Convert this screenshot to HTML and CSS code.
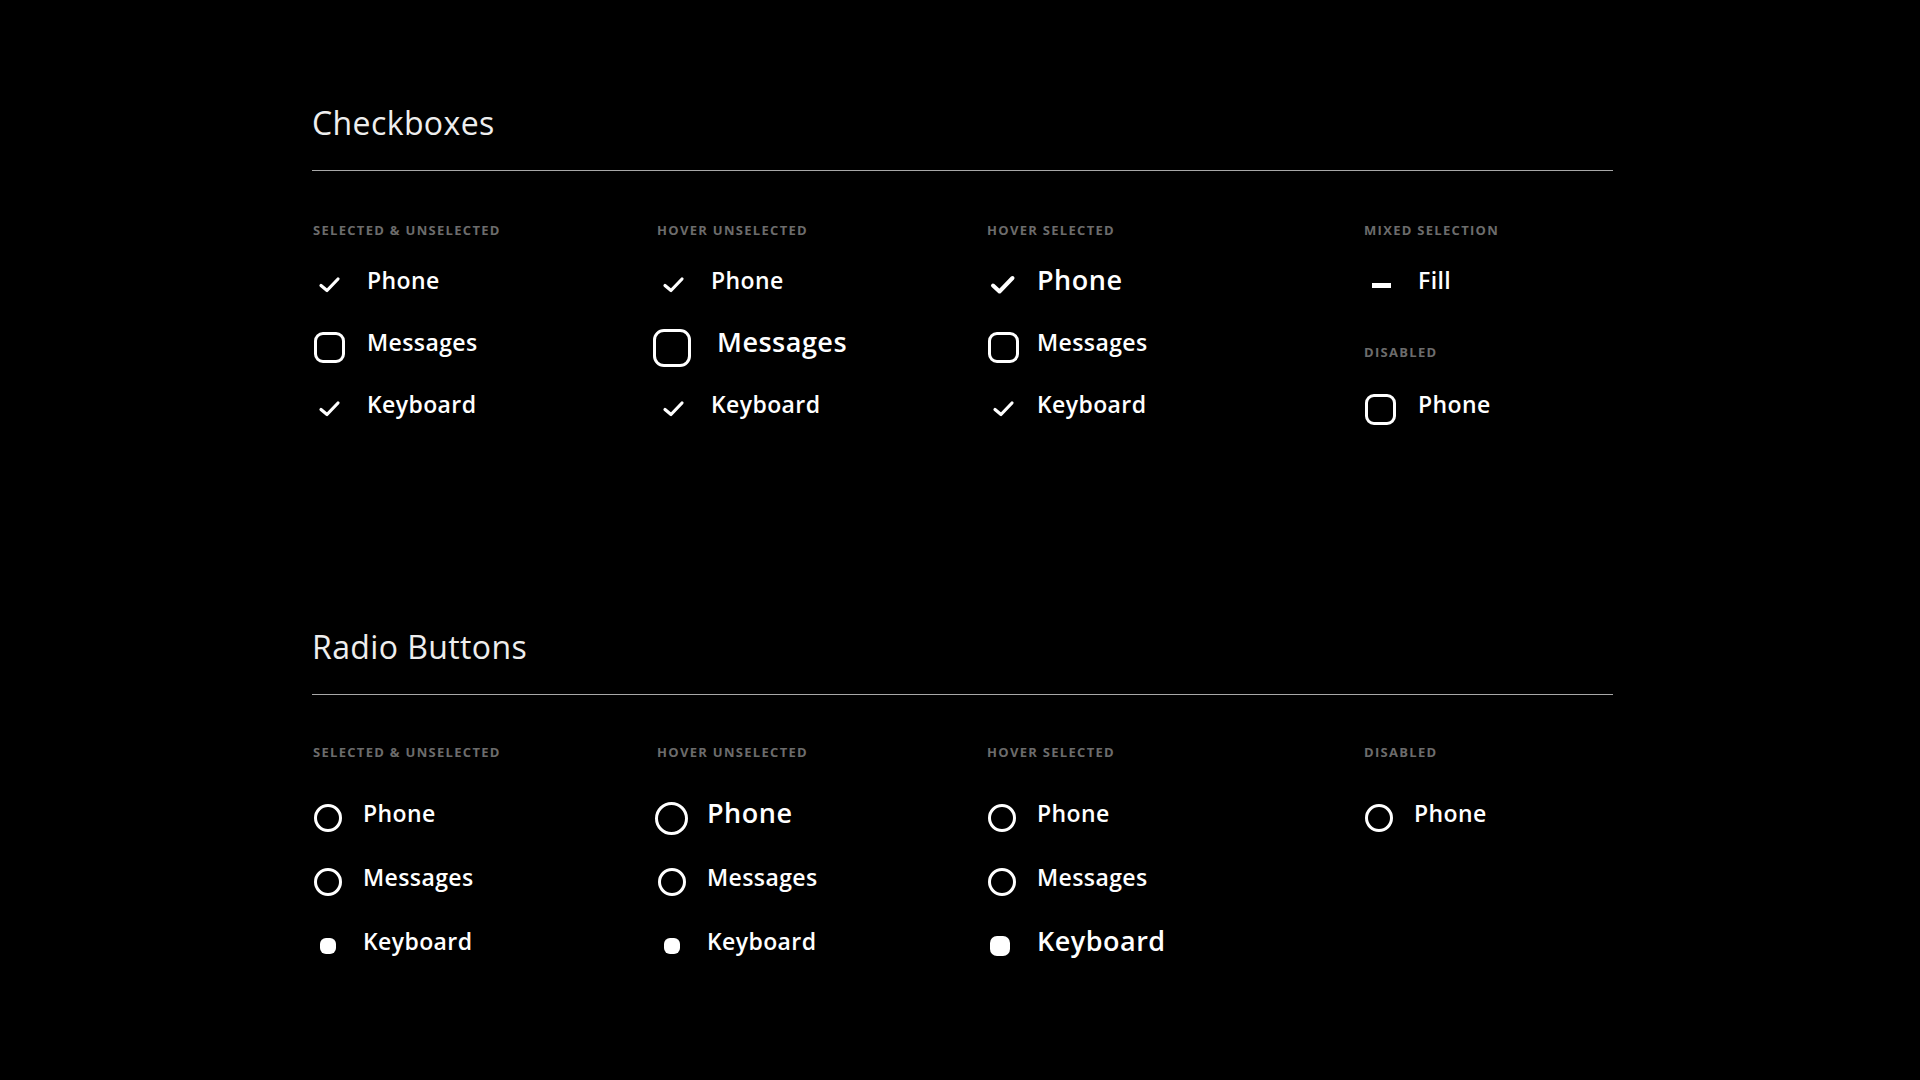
FILE: index.html
```html
<!DOCTYPE html>
<html lang="en">
<head>
  <meta charset="UTF-8" />
  <meta name="viewport" content="width=device-width, initial-scale=1.0" />
  <title>Checkboxes &amp; Radio Buttons</title>
  <link rel="stylesheet" href="styles.css">
</head>
<body>

  <section class="section section-check">
    <h2 class="section-title">Checkboxes</h2>
    <div class="columns">
      <div class="col">
        <div class="label">Selected &amp; Unselected</div>
        <div class="row"><span class="icon"><svg class="check" width="31" height="31" viewBox="0 0 31 31"><polyline points="7,15.5 13,20.5 24,9"/></svg></span><span class="text">Phone</span></div>
        <div class="row"><span class="icon"><span class="box"></span></span><span class="text">Messages</span></div>
        <div class="row"><span class="icon"><svg class="check" width="31" height="31" viewBox="0 0 31 31"><polyline points="7,15.5 13,20.5 24,9"/></svg></span><span class="text">Keyboard</span></div>
      </div>
      <div class="col">
        <div class="label">Hover Unselected</div>
        <div class="row"><span class="icon"><svg class="check" width="31" height="31" viewBox="0 0 31 31"><polyline points="7,15.5 13,20.5 24,9"/></svg></span><span class="text">Phone</span></div>
        <div class="row"><span class="icon"><span class="box box-hover"></span></span><span class="text text-hover text-shift">Messages</span></div>
        <div class="row"><span class="icon"><svg class="check" width="31" height="31" viewBox="0 0 31 31"><polyline points="7,15.5 13,20.5 24,9"/></svg></span><span class="text">Keyboard</span></div>
      </div>
      <div class="col col-narrow">
        <div class="label">Hover Selected</div>
        <div class="row"><span class="icon"><svg class="check check-hover" width="31" height="31" viewBox="0 0 31 31"><polyline points="5,15.5 11.5,21.5 24.5,8"/></svg></span><span class="text text-hover">Phone</span></div>
        <div class="row"><span class="icon"><span class="box"></span></span><span class="text">Messages</span></div>
        <div class="row"><span class="icon"><svg class="check" width="31" height="31" viewBox="0 0 31 31"><polyline points="7,15.5 13,20.5 24,9"/></svg></span><span class="text">Keyboard</span></div>
      </div>
      <div class="col">
        <div class="label">Mixed Selection</div>
        <div class="row"><span class="icon"><span class="dash"></span></span><span class="text">Fill</span></div>
        <div class="row row-label"><div class="label">Disabled</div></div>
        <div class="row"><span class="icon"><span class="box"></span></span><span class="text">Phone</span></div>
      </div>
    </div>
  </section>

  <section class="section section-radio">
    <h2 class="section-title">Radio Buttons</h2>
    <div class="columns">
      <div class="col">
        <div class="label">Selected &amp; Unselected</div>
        <div class="row"><span class="icon"><span class="ring"></span></span><span class="text">Phone</span></div>
        <div class="row"><span class="icon"><span class="ring"></span></span><span class="text">Messages</span></div>
        <div class="row"><span class="icon"><span class="dot"></span></span><span class="text">Keyboard</span></div>
      </div>
      <div class="col">
        <div class="label">Hover Unselected</div>
        <div class="row"><span class="icon"><span class="ring ring-hover"></span></span><span class="text text-hover">Phone</span></div>
        <div class="row"><span class="icon"><span class="ring"></span></span><span class="text">Messages</span></div>
        <div class="row"><span class="icon"><span class="dot"></span></span><span class="text">Keyboard</span></div>
      </div>
      <div class="col">
        <div class="label">Hover Selected</div>
        <div class="row"><span class="icon"><span class="ring"></span></span><span class="text">Phone</span></div>
        <div class="row"><span class="icon"><span class="ring"></span></span><span class="text">Messages</span></div>
        <div class="row"><span class="icon"><span class="dot dot-hover"></span></span><span class="text text-hover">Keyboard</span></div>
      </div>
      <div class="col">
        <div class="label">Disabled</div>
        <div class="row"><span class="icon"><span class="ring"></span></span><span class="text">Phone</span></div>
      </div>
    </div>
  </section>

</body>
</html>
```

FILE: styles.css
```css
body {
  margin: 0;
  background: #000;
  color: #fff;
  font-family: 'Open Sans', 'Noto Sans', sans-serif;
  padding: 103px 0 0 312px;
}

.section {
  width: 1301px;
}

.section-radio {
  margin-top: 192px;
}

.section-title {
  margin: 0;
  font-size: 32px;
  line-height: 40px;
  font-weight: 500;
  letter-spacing: 0.4px;
  color: #eeeeee;
  padding-bottom: 27px;
  border-bottom: 1.5px solid #a8a8a8;
}

.columns {
  display: grid;
  grid-template-columns: 344px 330px 377px 1fr;
  padding-top: 51px;
}

.section-radio .columns {
  padding-top: 49px;
}

.label {
  font-size: 13px;
  line-height: 16px;
  font-weight: 700;
  letter-spacing: 1.3px;
  text-transform: uppercase;
  color: #6c6c6c;
  padding-left: 1px;
  margin-bottom: 11px;
}

.section-radio .label {
  margin-bottom: 21px;
}

.row {
  height: 62px;
  display: flex;
  align-items: center;
}

.section-radio .row {
  height: 64px;
}

.row-label {
  align-items: flex-start;
  padding-top: 33px;
  box-sizing: border-box;
}

.row-label .label {
  margin: 0;
}

.icon {
  width: 55px;
  flex: none;
  display: flex;
  align-items: center;
  margin-top: 11px;
}

.col-narrow .icon {
  width: 51px;
}

.section-radio .icon {
  width: 51px;
  margin-top: 10px;
}

.text {
  font-size: 23px;
  line-height: 30px;
  font-weight: 600;
  letter-spacing: 0.4px;
}

.text-hover {
  font-size: 27px;
  letter-spacing: 0.5px;
}

.text-shift {
  margin-left: 6px;
}

.check {
  display: block;
  margin-left: 2px;
}

.check polyline {
  fill: none;
  stroke: #fff;
  stroke-width: 3.2;
  stroke-linecap: round;
  stroke-linejoin: round;
}

.check-hover polyline {
  stroke-width: 4;
}

.box {
  display: block;
  width: 31px;
  height: 31px;
  box-sizing: border-box;
  border: 3px solid #fff;
  border-radius: 9px;
  margin-left: 2px;
}

.box-hover {
  width: 38px;
  height: 38px;
  border-radius: 11px;
  margin-left: -3px;
}

.dash {
  display: block;
  width: 19px;
  height: 5px;
  background: #fff;
  margin-left: 9px;
}

.ring {
  display: block;
  width: 28px;
  height: 28px;
  box-sizing: border-box;
  border: 3px solid #fff;
  border-radius: 50%;
  margin-left: 2px;
}

.ring-hover {
  width: 33px;
  height: 33px;
  margin-left: -1px;
}

.dot {
  display: block;
  width: 16px;
  height: 16px;
  background: #fff;
  border-radius: 6px;
  margin-left: 8px;
}

.dot-hover {
  width: 20px;
  height: 20px;
  border-radius: 7px;
  margin-left: 4px;
}
```
